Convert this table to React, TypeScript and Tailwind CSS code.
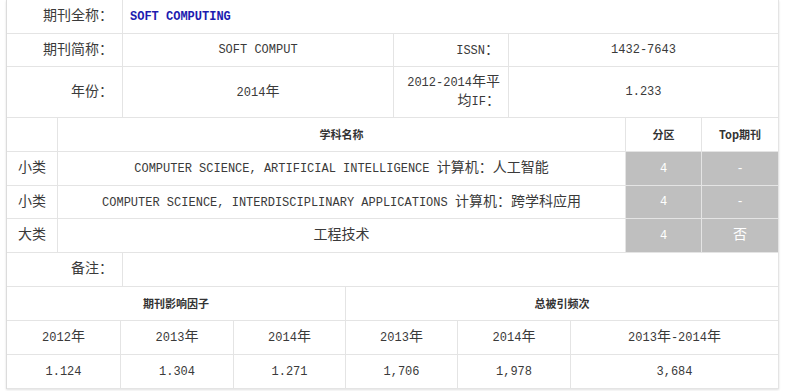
import type { ReactNode } from 'react';

// split text into CJK / latin runs so the CJK glyphs get the larger size
function mix(text: string): ReactNode {
  const parts = text.split(/([\u3000-\u9fff\uff00-\uffef]+)/).filter(Boolean);
  return (
    <span className="whitespace-pre">
      {parts.map((part, i) =>
        /[\u3000-\u9fff\uff00-\uffef]/.test(part) ? (
          <span key={i} className="text-[14px]">
            {part}
          </span>
        ) : (
          <span key={i}>{part}</span>
        )
      )}
    </span>
  );
}

const cell = 'border-r border-b border-[#e4e4e4] flex items-center';
const head = 'font-["Noto_Sans_CJK_SC",sans-serif] text-[11px] font-bold text-[#333]';
const gray = 'bg-[#bfbfbf] text-white justify-center';

const subjects = [
  { kind: '小类', name: 'COMPUTER SCIENCE, ARTIFICIAL INTELLIGENCE 计算机：人工智能', zone: '4', top: '-', h: 'h-[34px]' },
  { kind: '小类', name: 'COMPUTER SCIENCE, INTERDISCIPLINARY APPLICATIONS 计算机：跨学科应用', zone: '4', top: '-', h: 'h-[33px]' },
  { kind: '大类', name: '工程技术', zone: '4', top: '否', h: 'h-[34px]' },
];

const years = ['2012年', '2013年', '2014年', '2013年', '2014年', '2013年-2014年'];
const values = ['1.124', '1.304', '1.271', '1,706', '1,978', '3,684'];

export default function App() {
  return (
    <div className="w-[785px] h-[391px] bg-white overflow-hidden">
      <div className="ml-[6px] w-[773px] border-l border-[#dcdcdc] shadow-[0_1px_2px_rgba(0,0,0,0.12)] font-['Liberation_Mono','Noto_Sans_CJK_SC',monospace] text-[12px] text-[#3a3a3a]">
        {/* journal info */}
        <div className="grid grid-cols-[116px_656px] h-[34px]">
          <div className={`${cell} justify-end pr-[9px]`}>{mix('期刊全称：')}</div>
          <div className={`${cell} pl-[7px] font-bold text-[#1c1cb0]`}>SOFT COMPUTING</div>
        </div>
        <div className="grid grid-cols-[116px_271px_115px_270px] h-[33px]">
          <div className={`${cell} justify-end pr-[9px]`}>{mix('期刊简称：')}</div>
          <div className={`${cell} justify-center`}>SOFT COMPUT</div>
          <div className={`${cell} justify-end pr-[9px]`}>{mix('ISSN：')}</div>
          <div className={`${cell} justify-center`}>1432-7643</div>
        </div>
        <div className="grid grid-cols-[116px_271px_115px_270px] h-[51px]">
          <div className={`${cell} justify-end pr-[9px]`}>{mix('年份：')}</div>
          <div className={`${cell} justify-center`}>{mix('2014年')}</div>
          <div className={`${cell} justify-end pr-[8px]`}>
            <div className="text-right leading-[18px]">
              <div>{mix('2012-2014年平')}</div>
              <div>{mix('均IF：')}</div>
            </div>
          </div>
          <div className={`${cell} justify-center`}>1.233</div>
        </div>

        {/* subjects */}
        <div className="grid grid-cols-[51px_568px_76px_77px] h-[34px]">
          <div className={cell} />
          <div className={`${cell} justify-center ${head}`}>学科名称</div>
          <div className={`${cell} justify-center ${head}`}>分区</div>
          <div className={`${cell} justify-center ${head}`}>Top期刊</div>
        </div>
        {subjects.map((s, i) => (
          <div key={i} className={`grid grid-cols-[51px_568px_76px_77px] ${s.h}`}>
            <div className={`${cell} justify-center`}>{mix(s.kind)}</div>
            <div className={`${cell} justify-center`}>{mix(s.name)}</div>
            <div className={`${cell} ${gray}`}>{s.zone}</div>
            <div className={`${cell} ${gray}`}>{mix(s.top)}</div>
          </div>
        ))}

        {/* remark */}
        <div className="grid grid-cols-[116px_656px] h-[34px]">
          <div className={`${cell} justify-end pr-[9px]`}>{mix('备注：')}</div>
          <div className={cell} />
        </div>

        {/* impact factor + citations */}
        <div className="grid grid-cols-[339px_433px] h-[34px]">
          <div className={`${cell} justify-center ${head}`}>期刊影响因子</div>
          <div className={`${cell} justify-center ${head}`}>总被引频次</div>
        </div>
        <div className="grid grid-cols-[114px_113px_112px_112px_113px_208px] h-[34px]">
          {years.map((y, i) => (
            <div key={i} className={`${cell} justify-center`}>
              {mix(y)}
            </div>
          ))}
        </div>
        <div className="grid grid-cols-[114px_113px_112px_112px_113px_208px] h-[34px]">
          {values.map((v, i) => (
            <div key={i} className={`${cell} justify-center`}>
              {v}
            </div>
          ))}
        </div>
      </div>
    </div>
  );
}
